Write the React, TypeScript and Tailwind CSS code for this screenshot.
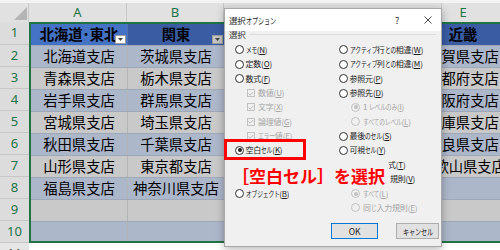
import React from "react";

const jp = "font-['Noto_Sans_CJK_JP',sans-serif]";

const rows = [
  { a: "北海道支店", b: "茨城県支店", e: "滋賀県支店" },
  { a: "青森県支店", b: "栃木県支店", e: "京都府支店" },
  { a: "岩手県支店", b: "群馬県支店", e: "大阪府支店" },
  { a: "宮城県支店", b: "埼玉県支店", e: "兵庫県支店" },
  { a: "秋田県支店", b: "千葉県支店", e: "奈良県支店" },
  { a: "山形県支店", b: "東京都支店", e: "和歌山県支店" },
  { a: "福島県支店", b: "神奈川県支店", e: "" },
  { a: "", b: "", e: "" },
  { a: "", b: "", e: "" },
];

// the dialog's UI font has narrow kana: squeeze kana runs, give back the saved width
const KANA_SCALE = 0.72;
const Ui = ({ t, fs = 8 }: { t: string; fs?: number }) => (
  <>
    {t.split(/([\u3040-\u30ff]+)/).map((s, i) =>
      /[\u3040-\u30ff]/.test(s) ? (
        <span
          key={i}
          className="inline-block origin-left scale-x-[0.72]"
          style={{ marginRight: -s.length * (fs - 0.2) * (1 - KANA_SCALE) }}
        >
          {s}
        </span>
      ) : (
        <span key={i}>{s}</span>
      )
    )}
  </>
);

const FilterBtn = ({ shaded }: { shaded?: boolean }) => (
  <div
    className={
      "absolute right-[1px] bottom-[1px] w-[11px] h-[9px] border border-[#9c9c9c] flex items-center justify-center " +
      (shaded ? "bg-[#c4c4c4]" : "bg-white")
    }
  >
    <svg width="5" height="3" viewBox="0 0 5 3">
      <path d="M0 0h5L2.5 3z" fill="#444" />
    </svg>
  </div>
);

const Radio = ({ checked, disabled }: { checked?: boolean; disabled?: boolean }) => (
  <div
    className={
      "w-[9px] h-[9px] rounded-full border flex items-center justify-center shrink-0 " +
      (disabled ? "border-[#c2c2c2] bg-[#f0f0f0]" : "border-[#333] bg-white")
    }
  >
    {checked && <div className={"w-[4px] h-[4px] rounded-full " + (disabled ? "bg-[#c2c2c2]" : "bg-[#222]")} />}
  </div>
);

const Check = () => (
  <div className="w-[8px] h-[8px] border border-[#c2c2c2] bg-[#f0f0f0] flex items-center justify-center shrink-0">
    <svg width="6" height="5" viewBox="0 0 6 5">
      <path d="M0.5 2.5l1.7 1.7L5.5 0.8" stroke="#b8b8b8" strokeWidth="1" fill="none" />
    </svg>
  </div>
);

type Item = {
  kind: "radio" | "check" | "sub" | "none" | "tail";
  label?: string;
  key?: string;
  checked?: boolean;
  pad?: string;
};

const leftItems: Item[] = [
  { kind: "radio", label: "メモ", key: "N" },
  { kind: "radio", label: "定数", key: "O" },
  { kind: "radio", label: "数式", key: "F" },
  { kind: "check", label: "数値", key: "U" },
  { kind: "check", label: "文字", key: "X" },
  { kind: "check", label: "論理値", key: "G" },
  { kind: "check", label: "エラー値", key: "E" },
  { kind: "radio", label: "空白セル", key: "K", checked: true },
  { kind: "none" },
  { kind: "none" },
  { kind: "radio", label: "オブジェクト", key: "B" },
  { kind: "none" },
];

// 条件付き書式 / データの入力規則 are mostly hidden under the annotation
const rightItems: Item[] = [
  { kind: "radio", label: "アクティブ行との相違", key: "W" },
  { kind: "radio", label: "アクティブ列との相違", key: "M" },
  { kind: "radio", label: "参照元", key: "P" },
  { kind: "radio", label: "参照先", key: "D" },
  { kind: "sub", label: "1 レベルのみ", key: "I", checked: true },
  { kind: "sub", label: "すべてのレベル", key: "L" },
  { kind: "radio", label: "最後のセル", key: "S" },
  { kind: "radio", label: "可視セル", key: "Y" },
  { kind: "tail", label: "式", key: "T", pad: "pl-[49px]" },
  { kind: "tail", label: "規則", key: "V", pad: "pl-[51px]" },
  { kind: "sub", label: "すべて", key: "L", checked: true },
  { kind: "sub", label: "同じ入力規則", key: "E" },
];

const Option = ({ item }: { item: Item }) => {
  if (item.kind === "none") return <div className="h-[14.36px]" />;
  if (item.kind === "tail")
    return (
      <div className={"h-[14.36px] flex items-center whitespace-nowrap text-[#1b1b1b] " + item.pad}>
        <span>
          {item.label}(<span className="underline">{item.key}</span>)
        </span>
      </div>
    );
  const disabled = item.kind === "check" || item.kind === "sub";
  return (
    <div
      className={
        "h-[14.36px] flex items-center whitespace-nowrap " +
        (item.kind === "check" ? "pl-[12px] gap-[3px]" : item.kind === "sub" ? "pl-[12px] gap-[3px]" : "gap-[1.5px]") +
        (disabled ? " text-[#a6a6a6]" : " text-[#1b1b1b]")
      }
    >
      {item.kind === "check" ? <Check /> : <Radio checked={item.checked} disabled={disabled} />}
      <span>
        <Ui t={item.label || ""} />(<span className="underline">{item.key}</span>)
      </span>
    </div>
  );
};

const Dialog = () => (
  <div
    className={
      "absolute left-[224px] top-[8px] w-[218px] h-[239px] bg-[#f0f0f0] border border-[#a8a8a8] shadow-[0_2px_8px_rgba(0,0,0,0.3)] text-[8px] tracking-[-0.2px] leading-none " +
      jp
    }
  >
    <div className="h-[22px] bg-white flex items-center pl-[4px] text-[#222] text-[8.5px]">
      <span className="flex-1 whitespace-nowrap">
        <Ui t="選択オプション" fs={8.5} />
      </span>
      <span className="text-[9px] w-[29px]">?</span>
      <svg width="8" height="8" viewBox="0 0 8 8" className="mr-[9px]">
        <path d="M0.5 0.5l7 7M7.5 0.5l-7 7" stroke="#333" strokeWidth="0.9" />
      </svg>
    </div>
    <div className="flex items-center pl-[4px] mt-[-1px] h-[8px] text-[#333] text-[8.5px]">
      <span>選択</span>
      <div className="flex-1 h-px bg-[#dcdcdc] ml-[3px] mr-[5px]" />
    </div>
    <div className="flex pl-[10px] mt-[4.8px]">
      <div className="w-[104px] flex flex-col">
        {leftItems.map((it, i) => (
          <Option key={i} item={it} />
        ))}
      </div>
      <div className="flex flex-col">
        {rightItems.map((it, i) => (
          <Option key={i} item={it} />
        ))}
      </div>
    </div>
    <div className="flex mt-[8px] pl-[106px] gap-[18px] text-[8.5px] text-[#222]">
      <div className="w-[47px] h-[16px] border border-[#0078d7] bg-[#e1e1e1] flex items-center justify-center">OK</div>
      <div className="w-[43px] h-[16px] border border-[#adadad] bg-[#e1e1e1] flex items-center justify-center whitespace-nowrap">
        <Ui t="キャンセル" fs={8.5} />
      </div>
    </div>

    {/* 注釈 */}
    <div className="absolute left-[-1px] top-[130px] w-[82px] h-[21px] border-[3px] border-[#ff0000]" />
    <div className="absolute left-[4px] top-[154px] w-[160px] h-[24px] bg-[#f0f0f0] flex items-center pl-[3px]">
      <span className="text-[17px] font-bold text-[#ff0000] tracking-[0px]">［空白セル］を選択</span>
    </div>
  </div>
);

export default function App() {
  return (
    <div className={"relative w-[500px] h-[250px] overflow-hidden bg-white " + jp}>
      <div className="h-[3px] bg-[#f3f3f3]" />
      {/* column headers */}
      <div className="flex h-[19px] bg-[#e1e1e1] font-['Noto_Sans',sans-serif] text-[13px] text-[#217346]">
        <div className="w-[29px] h-full relative border-r border-[#c8c8c8] shrink-0">
          <svg width="29" height="19" viewBox="0 0 29 19" className="absolute inset-0">
            <path d="M27 4v13H14z" fill="#b4b4b4" />
          </svg>
        </div>
        <div className="w-[98px] shrink-0 flex items-center justify-center border-r border-[#c8c8c8]">A</div>
        <div className="w-[97px] shrink-0 flex items-center justify-center border-r border-[#c8c8c8]">B</div>
        <div className="w-[218px] shrink-0 border-r border-[#c8c8c8]" />
        <div className="w-[42px] shrink-0 flex items-center justify-center">E</div>
      </div>

      <div className="flex">
        {/* row headers */}
        <div className="w-[29px] shrink-0 flex flex-col font-['Noto_Sans',sans-serif] text-[13px]">
          {Array.from({ length: 11 }, (_, i) => (
            <div
              key={i}
              className={
                "flex items-center justify-center border-b border-[#c6c6c6] " +
                (i === 0 ? "h-[23px] " : "h-[22px] ") +
                (i < 10 ? "bg-[#dcdcdc] text-[#217346]" : "bg-[#e6e6e6] text-[#444]")
              }
            >
              {i + 1}
            </div>
          ))}
        </div>

        <div className="flex flex-col">
          <div className="w-[490px] border-2 border-[#217346] text-[14.3px] text-black leading-none">
            {/* row 1 */}
            <div className="flex h-[21px] font-bold">
              <div className="relative w-[96px] shrink-0 bg-[#4472c4] flex items-center justify-center whitespace-nowrap overflow-hidden">
                北海道･東北
                <FilterBtn />
              </div>
              <div className="relative w-[97px] shrink-0 bg-[#3a5ca3] border-l border-[#5371ad] flex items-center justify-center">
                関東
                <FilterBtn shaded />
              </div>
              <div className="w-[218px] shrink-0 bg-[#3a5ca3]" />
              <div className="w-[60px] shrink-0 bg-[#3a5ca3] overflow-hidden flex">
                <div className="w-[42px] shrink-0 flex items-center justify-center whitespace-nowrap">近畿</div>
              </div>
            </div>
            {rows.map((r, i) => (
              <div
                key={i}
                className={
                  "flex border-t border-[#9fa8b8] " +
                  (i === 8 ? "h-[20px] " : "h-[22px] ") +
                  (i % 2 === 0 ? "bg-[#adb7ca]" : "bg-[#c9c9c9]")
                }
              >
                <div className="w-[96px] shrink-0 flex items-center justify-center whitespace-nowrap">{r.a}</div>
                <div className="w-[97px] shrink-0 border-l border-[#b4b4b4] flex items-center justify-center whitespace-nowrap">
                  {r.b}
                </div>
                <div className="w-[218px] shrink-0" />
                <div className="w-[60px] shrink-0 overflow-hidden flex">
                  <div className="w-[42px] shrink-0 flex items-center justify-center whitespace-nowrap">{r.e}</div>
                </div>
              </div>
            ))}
          </div>
          <div className="h-[22px] bg-white" />
        </div>
      </div>

      <Dialog />
    </div>
  );
}
